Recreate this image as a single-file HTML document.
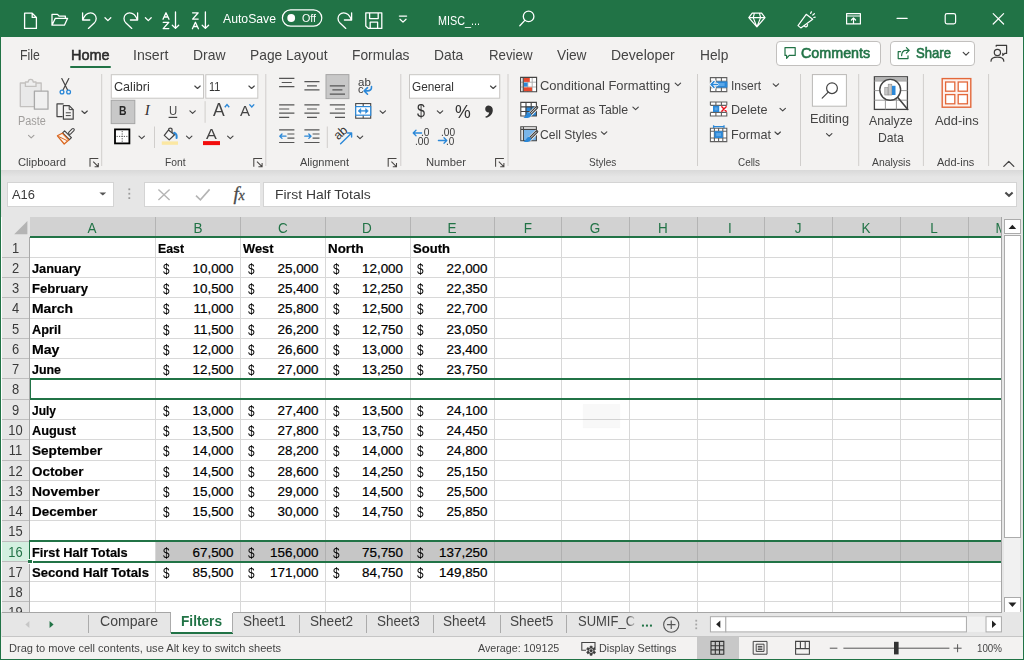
<!DOCTYPE html><html><head><meta charset="utf-8"><title>Excel</title><style>
*{box-sizing:border-box;margin:0;padding:0}
html,body{width:1024px;height:660px;overflow:hidden;background:#f3f2f1;font-family:"Liberation Sans",sans-serif;}
.abs{position:absolute}
.t{position:absolute;white-space:nowrap;line-height:1;color:#444}
#titlebar{position:absolute;left:0;top:0;width:1024px;height:37px;background:#217346}
#tabs{position:absolute;left:0;top:37px;width:1024px;height:35px;background:#f3f2f1}
#ribbon{position:absolute;left:0;top:72px;width:1024px;height:98px;background:#f3f2f1}
#fbar{position:absolute;left:0;top:170px;width:1024px;height:47px;background:#e6e6e6}
#grid{position:absolute;left:0;top:217px;width:1024px;height:395px;background:#fff;overflow:hidden}
#sheettabs{position:absolute;left:0;top:611.6px;width:1024px;height:25.4px;background:#e6e6e6}
#status{position:absolute;left:0;top:637px;width:1024px;height:23px;background:#f3f2f1}
.wb{position:absolute;background:#217346}
svg{position:absolute;overflow:visible}
.cell{position:absolute;white-space:nowrap;font-size:13.4px;line-height:20px;color:#000;height:20px;-webkit-text-stroke:0.2px #000}
.b{font-weight:bold;transform-origin:0 50%}
</style></head><body>
<div id="titlebar">
<svg style="left:0;top:0" width="1024" height="37" fill="none" stroke="#fff" stroke-width="1.3" stroke-linecap="round" stroke-linejoin="round">
<!-- new doc -->
<path d="M24.6 13.2 H32.2 L36.4 17.4 V28.4 H24.6 Z M32.2 13.2 V17.4 H36.4"/>
<!-- open folder -->
<path d="M52 25.2 V14.4 H57.5 L59.3 16.2 H65.4 V18.3 M52 25.2 L55.3 18.3 H67.6 L64.4 25.2 Z"/>
<!-- undo -->
<path d="M82.6 12.8 V20 H89.8 M82.8 19.8 C84.5 15.5 87.5 12.9 90.6 12.9 C94 12.9 96.2 15.6 96.2 18.6 C96.2 20.4 95.4 21.9 94.2 23.1 L88.4 28.4"/>
<path d="M105 17.8 L107.9 20.6 L110.8 17.8"/>
<!-- redo -->
<path d="M137.6 12.8 V20 H130.4 M137.4 19.8 C135.7 15.5 132.7 12.9 129.6 12.9 C126.2 12.9 124 15.6 124 18.6 C124 20.4 124.8 21.9 126 23.1 L131.8 28.4"/>
<path d="M145.4 17.8 L148.3 20.6 L151.2 17.8"/>
<!-- sort AZ -->
<path d="M175.5 11.9 V28.4 M172.3 25.2 L175.5 28.4 L178.7 25.2"/>
<path d="M163 19.2 L166 12.8 L169 19.2 M164.1 17 H167.9"/>
<path d="M163.2 22.3 H168.8 L163.2 28.6 H168.8"/>
<!-- sort ZA -->
<path d="M205.4 11.9 V28.4 M202.2 25.2 L205.4 28.4 L208.6 25.2"/>
<path d="M192.6 12.8 H198.2 L192.6 19.1 H198.2"/>
<path d="M192.4 28.7 L195.4 22.3 L198.4 28.7 M193.5 26.5 H197.3"/>
<!-- toggle -->
<rect x="282.4" y="9.8" width="39.4" height="16.4" rx="8.2" stroke-width="1.2"/>
<circle cx="291.2" cy="18" r="3.9" fill="#fff" stroke="none"/>
<!-- repeat -->
<path d="M351.6 12.8 V20 H344.4 M351.4 19.8 C349.7 15.5 346.7 12.9 343.6 12.9 C340.2 12.9 338 15.6 338 18.6 C338 20.4 338.8 21.9 340 23.1 L345.8 28.4"/>
<!-- save -->
<path d="M365.8 12.8 H381.8 V28.4 H368.2 L365.8 26 Z M369.6 12.8 V18.6 H378.2 V12.8 M370.2 28.4 V22.2 H377.6 V28.4"/>
<!-- customize -->
<path d="M399.4 16.1 H406.6 M400 19.2 L403 22.1 L406 19.2"/>
<!-- search -->
<circle cx="528.6" cy="16.4" r="5.3"/><path d="M524.8 20.4 L519.8 25.8"/>
<!-- diamond -->
<path d="M752.2 13.1 H761.6 L765 17.6 L756.9 26.9 L748.8 17.6 Z M748.8 17.6 H765 M754.4 13.1 L753.2 17.6 L756.9 26.9 L760.6 17.6 L759.4 13.1" stroke-width="1.2"/>
<!-- megaphone -->
<path d="M806.2 14.3 L812.7 19.3 L800.8 27.9 L798 25.6 Z M804.4 25.6 C804.8 27.4 807.4 27.4 807.6 24.6 M810.6 13.4 L811.4 11.9 M812.8 15 L814.4 13.7 M813.8 17.5 L815.2 17.1" stroke-width="1.2"/>
<!-- ribbon display -->
<path d="M846.6 13.7 H860.4 V23.9 H846.6 Z M846.6 16 H860.4 M853.5 23.9 V18.2 M851.4 20 L853.5 18 L855.6 20" stroke-width="1.2"/>
<!-- min / max / close -->
<path d="M897 18.3 H907.2" stroke-width="1.2"/>
<rect x="945.2" y="13.7" width="10.4" height="10.2" rx="1.8" stroke-width="1.2"/>
<path d="M993.2 13.6 L1003.6 24 M1003.6 13.6 L993.2 24" stroke-width="1.2"/>
</svg>
<div class="t" style="left:222.5px;top:12.1px;font-size:13px;color:#fff;transform-origin:0 0;transform:scaleX(0.940);">AutoSave</div>
<div class="t" style="left:302.3px;top:12.6px;font-size:11px;color:#fff;transform-origin:0 0;transform:scaleX(0.974);">Off</div>
<div class="t" style="left:437.8px;top:13.7px;font-size:13px;color:#fff;transform-origin:0 0;transform:scaleX(0.829);">MISC_...</div>
</div>
<div id="tabs">
<div class="t" style="left:19.5px;top:9.6px;font-size:15px;color:#444;transform-origin:0 0;transform:scaleX(0.819);">File</div>
<div class="t" style="left:70.8px;top:9.6px;font-size:15px;color:#2b2b2b;transform-origin:0 0;transform:scaleX(0.967);-webkit-text-stroke:0.55px #2b2b2b;">Home</div>
<div class="t" style="left:133.0px;top:9.6px;font-size:15px;color:#444;transform-origin:0 0;transform:scaleX(0.941);">Insert</div>
<div class="t" style="left:192.5px;top:9.6px;font-size:15px;color:#444;transform-origin:0 0;transform:scaleX(0.928);">Draw</div>
<div class="t" style="left:250.0px;top:9.6px;font-size:15px;color:#444;transform-origin:0 0;transform:scaleX(0.920);">Page Layout</div>
<div class="t" style="left:352.3px;top:9.6px;font-size:15px;color:#444;transform-origin:0 0;transform:scaleX(0.920);">Formulas</div>
<div class="t" style="left:434.3px;top:9.6px;font-size:15px;color:#444;transform-origin:0 0;transform:scaleX(0.922);">Data</div>
<div class="t" style="left:488.5px;top:9.6px;font-size:15px;color:#444;transform-origin:0 0;transform:scaleX(0.884);">Review</div>
<div class="t" style="left:557.0px;top:9.6px;font-size:15px;color:#444;transform-origin:0 0;transform:scaleX(0.915);">View</div>
<div class="t" style="left:611.3px;top:9.6px;font-size:15px;color:#444;transform-origin:0 0;transform:scaleX(0.932);">Developer</div>
<div class="t" style="left:700.0px;top:9.6px;font-size:15px;color:#444;transform-origin:0 0;transform:scaleX(0.917);">Help</div>
<div class="abs" style="left:70px;top:28.5px;width:41px;height:2.9px;background:#217346;border-radius:1px"></div>
<div class="abs" style="left:775.5px;top:3.6000000000000014px;width:105px;height:25px;background:#fff;border:1px solid #c2c0be;border-radius:4px"></div>
<div class="abs" style="left:889.5px;top:3.6000000000000014px;width:85.5px;height:25px;background:#fff;border:1px solid #c2c0be;border-radius:4px"></div>
<div class="t" style="left:801.3px;top:8.9px;font-size:14.5px;color:#217346;transform-origin:0 0;transform:scaleX(0.987);-webkit-text-stroke:0.6px #217346;">Comments</div>
<div class="t" style="left:915.5px;top:8.9px;font-size:14.5px;color:#217346;transform-origin:0 0;transform:scaleX(0.905);-webkit-text-stroke:0.6px #217346;">Share</div>
<svg style="left:0;top:0" width="1024" height="35" fill="none" stroke="#217346" stroke-width="1.2" stroke-linecap="round" stroke-linejoin="round">
<path d="M785 10.600000000000001 H795.2 V18.4 H789.2 L786.6 21.4 V18.4 H785 Z"/>
<path d="M900.6 14.600000000000001 H898.2 V21.6 H908 V18.799999999999997 M901.6 18.6 C901.8 15.200000000000003 903.6 13.399999999999999 906 13.399999999999999 H908.8 M906.4 10.600000000000001 L909.2 13.399999999999999 L906.4 16.200000000000003"/>
<path d="M963.2 15.399999999999999 L966 18.200000000000003 L968.8 15.399999999999999" stroke="#444"/>
<g stroke="#3b3a39" stroke-width="1.2">
<circle cx="997.4" cy="15.399999999999999" r="3.1"/>
<path d="M991 24.200000000000003 C991 18.799999999999997 1003.8 18.799999999999997 1003.8 24.200000000000003"/>
<path d="M996.2 9.200000000000003 V8.399999999999999 H1006.6 V16.4 H1004.8 L1002.8 18.4 V16.4"/>
</g>
</svg>
</div>
<div id="ribbon">
<svg style="left:0;top:0" width="1024" height="98" viewBox="0 72 1024 98"><path d="M101.7 74 V166" stroke="#d0cecc" stroke-width="1"/><path d="M265.8 74 V166" stroke="#d0cecc" stroke-width="1"/><path d="M400.8 74 V166" stroke="#d0cecc" stroke-width="1"/><path d="M508 74 V166" stroke="#d0cecc" stroke-width="1"/><path d="M697.5 74 V166" stroke="#d0cecc" stroke-width="1"/><path d="M800.5 74 V166" stroke="#d0cecc" stroke-width="1"/><path d="M858.7 74 V166" stroke="#d0cecc" stroke-width="1"/><path d="M923.4 74 V166" stroke="#d0cecc" stroke-width="1"/><path d="M988.6 74 V166" stroke="#d0cecc" stroke-width="1"/><g fill="none" stroke="#c3c1bf" stroke-width="1.3" stroke-linejoin="round"><path d="M20.3 83 H41.2 V106.6 H20.3 Z" fill="#e9e9e9"/><path d="M25.4 86.4 V82 H28.2 C28.2 78.4 33.2 78.4 33.2 82 H36 V86.4 Z" fill="#eeeeee"/><rect x="34.4" y="91.2" width="13.6" height="18" fill="#f0f0f0" stroke="#a9a9a9"/></g><path d="M28.5 135.4 L31.2 137.9 L33.9 135.4" stroke="#a19f9d" stroke-width="1.15" fill="none" stroke-linecap="round" stroke-linejoin="round"/><g fill="none" stroke-linecap="round"><path d="M61.8 78.6 L67.6 90 M68.8 78.6 L63 90" stroke="#444" stroke-width="1.2"/><circle cx="62" cy="92" r="1.9" stroke="#2b88d8" stroke-width="1.3"/><circle cx="68.6" cy="92" r="1.9" stroke="#2b88d8" stroke-width="1.3"/></g><g fill="none" stroke="#444" stroke-width="1.2" stroke-linejoin="round"><path d="M62.6 116.6 H57 V103.8 H63.6"/><path d="M63.4 105.6 H69.2 L73.2 109.6 V119.2 H63.4 Z" fill="#f3f2f1"/><path d="M69.2 105.6 V109.6 H73.2 M65.8 112.8 H70.8 M65.8 115.6 H70.8" stroke-width="1"/></g><path d="M81.9 111.0 L84.6 113.5 L87.3 111.0" stroke="#444" stroke-width="1.15" fill="none" stroke-linecap="round" stroke-linejoin="round"/><g fill="none" stroke-linejoin="round" stroke-linecap="round"><path d="M69.8 133 L73 129.8" stroke="#444" stroke-width="3.6"/><path d="M69.8 133 L73 129.8" stroke="#f3f2f1" stroke-width="1.5"/><path d="M64.6 130.8 L71.4 137.6 L69.4 139.6 L62.6 132.8 Z" stroke="#444" stroke-width="1.2" fill="#f3f2f1"/><path d="M62.2 133.2 L57.4 135.8 L64.2 144 L68.8 140 Z" stroke="#d9661f" stroke-width="1.2" fill="#fdf3ea"/><path d="M58.8 136.6 L66.6 140.4" stroke="#d9661f" stroke-width="1"/></g><path d="M90 166.70000000000002 V158.4 H98.3 M93.2 161.6 L98.2 166.6 M94.6 166.70000000000002 H98.3 V163.0" stroke="#484644" stroke-width="1.05" fill="none"/><rect x="111.3" y="74.7" width="92.2" height="23.5" fill="#fff" stroke="#c8c6c4" stroke-width="1"/><rect x="205.8" y="74.7" width="52" height="23.5" fill="#fff" stroke="#c8c6c4" stroke-width="1"/><path d="M194.8 86.0 L197.5 88.5 L200.2 86.0" stroke="#444" stroke-width="1.15" fill="none" stroke-linecap="round" stroke-linejoin="round"/><path d="M248.9 86.0 L251.6 88.5 L254.3 86.0" stroke="#444" stroke-width="1.15" fill="none" stroke-linecap="round" stroke-linejoin="round"/><rect x="111.2" y="100.3" width="23.6" height="23.3" fill="#c8c8c8" stroke="#a6a6a6" stroke-width="1"/><path d="M168.6 117.4 H177.2" stroke="#444" stroke-width="1.2"/><path d="M189.9 110.9 L192.6 113.4 L195.3 110.9" stroke="#444" stroke-width="1.15" fill="none" stroke-linecap="round" stroke-linejoin="round"/><path d="M205.1 101.2 V122.8" stroke="#d0cecc" stroke-width="1"/><path d="M224.8 107.2 L227 104.6 L229.2 107.2" stroke="#2b88d8" stroke-width="1.4" fill="none"/><path d="M249.4 104.4 L251.8 107 L254.2 104.4" stroke="#2b88d8" stroke-width="1.4" fill="none"/><rect x="115" y="129.4" width="14.4" height="14" fill="#fff" stroke="#000" stroke-width="1.8"/><path d="M122.2 131 V142 M116.6 136.4 H128" stroke="#555" stroke-width="1" stroke-dasharray="1.2 1.2"/><path d="M139.0 136.1 L141.7 138.6 L144.4 136.1" stroke="#444" stroke-width="1.15" fill="none" stroke-linecap="round" stroke-linejoin="round"/><path d="M154.5 126.5 V148" stroke="#d0cecc" stroke-width="1"/><g fill="none" stroke="#444" stroke-width="1.25" stroke-linejoin="round" stroke-linecap="round"><path d="M168.4 130.1 L164.3 135.4 L169.2 139.9 L174.5 134.7 Z" fill="#f6f6f6"/><path d="M168.7 130.4 V129 C168.7 127.8 172 127.8 172 129 V132.6"/></g><path d="M174.2 132.7 C176.2 133.4 176.9 135.6 176.6 138" stroke="#2b88d8" stroke-width="2" fill="none" stroke-linecap="round"/><rect x="161.8" y="141.4" width="16.2" height="3.4" fill="#fbe7a2"/><path d="M186.5 136.1 L189.2 138.6 L191.9 136.1" stroke="#444" stroke-width="1.15" fill="none" stroke-linecap="round" stroke-linejoin="round"/><rect x="203" y="141.1" width="17" height="4" fill="#f20d0d"/><path d="M227.6 136.1 L230.3 138.6 L233.0 136.1" stroke="#444" stroke-width="1.15" fill="none" stroke-linecap="round" stroke-linejoin="round"/><path d="M253.8 166.70000000000002 V158.4 H262.1 M257.0 161.6 L262.0 166.6 M258.40000000000003 166.70000000000002 H262.1 V163.0" stroke="#484644" stroke-width="1.05" fill="none"/></svg>
<div class="t" style="left:17.5px;top:42.5px;font-size:12px;color:#a19f9d;transform-origin:0 0;transform:scaleX(0.906);">Paste</div>
<div class="t" style="left:18.3px;top:85.2px;font-size:11.5px;color:#444;transform-origin:0 0;transform:scaleX(0.975);">Clipboard</div>
<div class="t" style="left:113.6px;top:8.1px;font-size:13px;color:#333;transform-origin:0 0;transform:scaleX(0.969);">Calibri</div>
<div class="t" style="left:208.8px;top:8.1px;font-size:13px;color:#333;transform-origin:0 0;transform:scaleX(0.830);">11</div>
<div class="t" style="left:119.1px;top:31.9px;font-size:13.5px;font-weight:bold;color:#262626;transform-origin:0 0;transform:scaleX(0.769);">B</div>
<div class="t" style="left:144.8px;top:31.200000000000003px;font-size:15px;font-family:'Liberation Serif',serif;font-style:italic;color:#333">I</div>
<div class="t" style="left:168.8px;top:31.8px;font-size:13.5px;color:#444;transform-origin:0 0;transform:scaleX(0.841);">U</div>
<div class="t" style="left:213.3px;top:28.8px;font-size:18.5px;color:#444;transform-origin:0 0;transform:scaleX(0.948);">A</div>
<div class="t" style="left:240.2px;top:32.2px;font-size:14.5px;color:#444;transform-origin:0 0;transform:scaleX(1.034);">A</div>
<div class="t" style="left:206.2px;top:55.1px;font-size:14.5px;color:#444;transform-origin:0 0;transform:scaleX(1.117);">A</div>
<div class="t" style="left:165.3px;top:85.2px;font-size:11.5px;color:#444;transform-origin:0 0;transform:scaleX(0.895);">Font</div>
<svg style="left:0;top:0" width="1024" height="98" viewBox="0 72 1024 98"><rect x="326" y="74.6" width="22.9" height="24" fill="#c8c8c8" stroke="#a6a6a6" stroke-width="1"/><path d="M279.1 78.4 H294.4 M281.7 82.5 H291.8 M279.1 86.6 H294.4" stroke="#555" stroke-width="1.2" fill="none"/><path d="M304.4 81.6 H319.5 M307.0 85.8 H316.9 M304.4 89.9 H319.5" stroke="#555" stroke-width="1.2" fill="none"/><path d="M329.8 85.8 H345.0 M332.4 89.9 H342.4 M329.8 94.1 H345.0" stroke="#555" stroke-width="1.2" fill="none"/><path d="M279.1 104.9 H294.4 M279.1 109 H289.2 M279.1 113.2 H294.4 M279.1 117.3 H289.2" stroke="#555" stroke-width="1.2" fill="none"/><path d="M304.4 104.9 H319.5 M307.0 109 H316.9 M304.4 113.2 H319.5 M307.0 117.3 H316.9" stroke="#555" stroke-width="1.2" fill="none"/><path d="M329.8 104.9 H345.0 M335.0 109 H345.0 M329.8 113.2 H345.0 M335.0 117.3 H345.0" stroke="#555" stroke-width="1.2" fill="none"/><path d="M371.5 86.6 C371.8 89.6 370 90.9 367.4 90.9 H364.8 M367.5 87.6 L364.2 90.9 L367.5 94.2" stroke="#2b88d8" stroke-width="1.6" fill="none" stroke-linecap="round" stroke-linejoin="round"/><g fill="none" stroke="#444" stroke-width="1.1"><rect x="355.7" y="103.6" width="15" height="14.6" fill="#fff"/><path d="M363.2 103.6 V106.6 M363.2 115.2 V118.2"/></g><rect x="355.7" y="106.6" width="15" height="8.6" fill="#fdfeff" stroke="#2b88d8" stroke-width="1.2"/><path d="M360 110.9 H366.4" stroke="#2b88d8" stroke-width="1.3" fill="none"/><path d="M358 110.9 L360.8 108.4 V113.4 Z M368.4 110.9 L365.6 108.4 V113.4 Z" fill="#2b88d8" stroke="#2b88d8" stroke-width="0.5" stroke-linejoin="round"/><path d="M380.1 110.9 L382.8 113.4 L385.5 110.9" stroke="#444" stroke-width="1.15" fill="none" stroke-linecap="round" stroke-linejoin="round"/><path d="M279.1 129.9 H294.4 M287.4 134 H294.4 M287.4 138.2 H294.4 M279.1 142.5 H294.4" stroke="#555" stroke-width="1.2"/><path d="M279.8 136.2 H286 M282 134 L279.8 136.2 L282 138.4" stroke="#2b88d8" stroke-width="1.3" fill="none" stroke-linecap="round" stroke-linejoin="round"/><path d="M304.4 129.9 H319.5 M312.6 134 H319.5 M312.6 138.2 H319.5 M304.4 142.5 H319.5" stroke="#555" stroke-width="1.2"/><path d="M304.8 136.2 H311 M308.8 134 L311 136.2 L308.8 138.4" stroke="#2b88d8" stroke-width="1.3" fill="none" stroke-linecap="round" stroke-linejoin="round"/><path d="M327.3 126.5 V148" stroke="#d0cecc" stroke-width="1"/><path d="M340.6 143.8 L351.4 133.2 M347.6 133 H351.6 V137" stroke="#2b88d8" stroke-width="1.4" fill="none" stroke-linecap="round" stroke-linejoin="round"/><path d="M357.3 136.1 L360.0 138.6 L362.7 136.1" stroke="#444" stroke-width="1.15" fill="none" stroke-linecap="round" stroke-linejoin="round"/><path d="M388.2 166.70000000000002 V158.4 H396.5 M391.4 161.6 L396.4 166.6 M392.8 166.70000000000002 H396.5 V163.0" stroke="#484644" stroke-width="1.05" fill="none"/><rect x="409.5" y="74.7" width="90.2" height="23.5" fill="#fff" stroke="#c8c6c4" stroke-width="1"/><path d="M490.5 86.0 L493.2 88.5 L495.9 86.0" stroke="#444" stroke-width="1.15" fill="none" stroke-linecap="round" stroke-linejoin="round"/><path d="M437.3 110.9 L440.0 113.4 L442.7 110.9" stroke="#444" stroke-width="1.15" fill="none" stroke-linecap="round" stroke-linejoin="round"/><path d="M488.6 105.6 C491.4 105.6 492.8 107.8 492.8 110.2 C492.8 113.8 490.2 116.8 485.8 117.8 L485.4 116.6 C487.6 115.8 489 114.2 489.2 112.4 C487 112.6 485.2 111.2 485.2 109 C485.2 107 486.6 105.6 488.6 105.6 Z" fill="#333"/><path d="M413.2 133 H421.6 M416 130.2 L413.2 133 L416 135.8" stroke="#2b88d8" stroke-width="1.3" fill="none" stroke-linecap="round" stroke-linejoin="round"/><path d="M438.4 140.5 H446.8 M444 137.7 L446.8 140.5 L444 143.3" stroke="#2b88d8" stroke-width="1.3" fill="none" stroke-linecap="round" stroke-linejoin="round"/><path d="M495.6 166.70000000000002 V158.4 H503.90000000000003 M498.8 161.6 L503.8 166.6 M500.20000000000005 166.70000000000002 H503.90000000000003 V163.0" stroke="#484644" stroke-width="1.05" fill="none"/><rect x="520.6" y="77.4" width="16" height="14.4" fill="#fff"/><path d="M520.6 82.2 H536.6 M520.6 87 H536.6 M527.8 77.4 V91.8 M532.2 77.4 V91.8" stroke="#a8a8a8" stroke-width="0.9" fill="none"/><rect x="523.4" y="77.9" width="6.4" height="4" fill="#e8492e"/><rect x="523.4" y="82.7" width="4.2" height="3.9" fill="#2b88d8"/><rect x="523.4" y="87.4" width="8.6" height="4" fill="#e8492e"/><path d="M520.6 77.4 H536.6 V91.8 H520.6 Z M523.2 77.4 V91.8" stroke="#444" stroke-width="1.1" fill="none"/><rect x="520.8" y="102.4" width="15.6" height="13.6" fill="#fff"/><rect x="525.6" y="106.4" width="10.8" height="9.6" fill="#2b88d8"/><path d="M520.8 102.4 H536.4 V116.0 H520.8 Z M526.0 102.4 V116.0 M531.2 102.4 V116.0 M520.8 106.9 H536.4 M520.8 111.5 H536.4" stroke="#444" stroke-width="1.1" fill="none"/><path d="M537.4 107.0 L529 115.4" stroke="#fff" stroke-width="4.4"/><path d="M536.8 107.4 L530 114.2" stroke="#444" stroke-width="3" stroke-linecap="round"/><path d="M536.6 107.6 L530.6 113.6" stroke="#e0e0e0" stroke-width="1"/><path d="M529.4 112.6 C526.4 112.6 526.6 116.0 523.4 117.4 C527.6 118.8 531.6 117.2 531.4 114.4 Z" fill="#2b88d8"/><rect x="520.8" y="126.8" width="15.6" height="14" fill="#fff"/><rect x="523.4" y="129.4" width="13" height="11.4" fill="#7ab6ea"/><path d="M520.8 126.8 H536.4 V140.8 H520.8 Z M523.4 126.8 V140.8 M520.8 129.4 H536.4" stroke="#444" stroke-width="1.1" fill="none"/><path d="M537.4 131.2 L529 139.6" stroke="#fff" stroke-width="4.4"/><path d="M536.8 131.6 L530 138.4" stroke="#444" stroke-width="3" stroke-linecap="round"/><path d="M536.6 131.8 L530.6 137.8" stroke="#e0e0e0" stroke-width="1"/><path d="M529.4 136.8 C526.4 136.8 526.6 140.2 523.4 141.6 C527.6 143.0 531.6 141.4 531.4 138.6 Z" fill="#2b88d8"/><path d="M675.2 83.1 L677.9 85.6 L680.6 83.1" stroke="#444" stroke-width="1.15" fill="none" stroke-linecap="round" stroke-linejoin="round"/><path d="M632.9 107.2 L635.6 109.7 L638.3 107.2" stroke="#444" stroke-width="1.15" fill="none" stroke-linecap="round" stroke-linejoin="round"/><path d="M601.4 131.8 L604.1 134.3 L606.8 131.8" stroke="#444" stroke-width="1.15" fill="none" stroke-linecap="round" stroke-linejoin="round"/><rect x="710.4" y="77.6" width="16.4" height="14" fill="#fff"/><path d="M710.4 77.6 H726.8 V91.6 H710.4 Z M710.4 81.2 H726.8 M710.4 87.8 H726.8 M715.9 77.6 V91.6 M721.4 77.6 V91.6" stroke="#606060" stroke-width="1.1" fill="none"/><rect x="716.4" y="81.4" width="11" height="6.2" fill="#2b88d8"/><rect x="719" y="83" width="5.6" height="3" fill="#5aa7e8"/><path d="M711.2 84.5 H717 M714.2 81.3 L711 84.5 L714.2 87.7" stroke="#fff" stroke-width="3.4" fill="none" stroke-linecap="round" stroke-linejoin="round"/><path d="M711.2 84.5 H717.4 M714 81.6 L711 84.5 L714 87.4" stroke="#2b88d8" stroke-width="1.5" fill="none" stroke-linecap="round" stroke-linejoin="round"/><rect x="710.4" y="102" width="16.4" height="14" fill="#fff"/><path d="M710.4 105.2 V102 H726.8 V105.2 M710.4 105.4 H726.8 M710.4 112.4 H726.8 M710.4 112.4 V116 H726.8 V112.4 M715.9 102 V105.4 M721.4 102 V105.4 M715.9 112.4 V116 M721.4 112.4 V116" stroke="#606060" stroke-width="1.1" fill="none"/><rect x="713" y="105.8" width="6.2" height="6.2" fill="#2b88d8"/><rect x="714.6" y="107.4" width="3" height="3" fill="#5aa7e8"/><path d="M721.8 106.7 L726.2 111.3 M726.2 106.7 L721.8 111.3" stroke="#e8111c" stroke-width="1.4" stroke-linecap="round"/><rect x="710.4" y="128.2" width="16.4" height="13.4" fill="#fff"/><path d="M710.4 128.2 H726.8 V141.6 H710.4 Z M710.4 131.2 H726.8 M710.4 138 H726.8 M714.4 128.2 V141.6 M722.8 128.2 V141.6 M718.6 128.2 V131.2 M718.6 138 V141.6" stroke="#606060" stroke-width="1.1" fill="none"/><rect x="714.4" y="131.2" width="8.4" height="6.8" fill="#2b88d8"/><rect x="716.2" y="133" width="4.8" height="3.2" fill="#5aa7e8"/><path d="M713.6 126.6 H724 M713.6 125.2 V128 M724 125.2 V128" stroke="#2b88d8" stroke-width="1.3" fill="none"/><path d="M773.2 83.8 L775.9 86.3 L778.6 83.8" stroke="#444" stroke-width="1.15" fill="none" stroke-linecap="round" stroke-linejoin="round"/><path d="M780.0 108.4 L782.7 110.9 L785.4 108.4" stroke="#444" stroke-width="1.15" fill="none" stroke-linecap="round" stroke-linejoin="round"/><path d="M775.0 132.0 L777.7 134.5 L780.4 132.0" stroke="#444" stroke-width="1.15" fill="none" stroke-linecap="round" stroke-linejoin="round"/><rect x="812.4" y="74.6" width="34" height="31.6" fill="#fff" stroke="#bab8b6" stroke-width="1"/><circle cx="832" cy="88.2" r="5.4" fill="none" stroke="#444" stroke-width="1.2"/><path d="M828.2 92.2 L822.2 98.2" stroke="#444" stroke-width="1.2" stroke-linecap="round"/><path d="M826.5 133.6 L829.2 136.1 L831.9 133.6" stroke="#444" stroke-width="1.15" fill="none" stroke-linecap="round" stroke-linejoin="round"/><rect x="874.4" y="76.8" width="33" height="32.6" fill="#fff" stroke="#444" stroke-width="1.3"/><rect x="875" y="77.4" width="31.8" height="3.4" fill="#b5b5b5"/><path d="M874.4 81 H907.4 M874.4 90.6 H907.4 M874.4 100.2 H907.4 M885.4 81 V109.4 M896.4 81 V109.4" stroke="#9a9a9a" stroke-width="1" fill="none"/><circle cx="890.2" cy="89.8" r="10.4" fill="#fff" stroke="#444" stroke-width="1.4"/><rect x="884.8" y="87.6" width="3.3" height="7.4" fill="#c8c8c8" stroke="#8a8a8a" stroke-width="0.6"/><rect x="888.2" y="84.2" width="3.6" height="10.8" fill="#c8c8c8" stroke="#8a8a8a" stroke-width="0.6"/><rect x="892" y="85.8" width="3.5" height="9.2" fill="#2b88d8"/><path d="M897.8 97.6 L907.8 109.4" stroke="#444" stroke-width="1.6" stroke-linecap="round"/><rect x="942.2" y="78.6" width="28.6" height="28.6" fill="#fdf1ec" stroke="#e3683a" stroke-width="1.4"/><rect x="945.6" y="82" width="9.2" height="9.2" fill="#fff" stroke="#e3683a" stroke-width="1.3"/><rect x="958.2" y="82" width="9.2" height="9.2" fill="#fff" stroke="#e3683a" stroke-width="1.3"/><rect x="945.6" y="94.6" width="9.2" height="9.2" fill="#fff" stroke="#e3683a" stroke-width="1.3"/><rect x="958.2" y="94.6" width="9.2" height="9.2" fill="#fff" stroke="#e3683a" stroke-width="1.3"/><path d="M1003.8 166.4 L1008.8 161.4 L1013.8 166.4" stroke="#444" stroke-width="1.3" fill="none" stroke-linecap="round" stroke-linejoin="round"/></svg>
<div class="t" style="left:357.6px;top:4.5px;font-size:10.5px;color:#3a3a3a;transform-origin:0 0;transform:scaleX(1.096);">ab</div>
<div class="t" style="left:357.6px;top:11.9px;font-size:11.5px;color:#3a3a3a;transform-origin:0 0;transform:scaleX(0.974);">c</div>
<div class="t" style="left:333.6px;top:55.2px;font-size:12.5px;color:#333;transform:rotate(-43deg);transform-origin:50% 50%;letter-spacing:-0.3px">ab</div>
<div class="t" style="left:300.4px;top:85.2px;font-size:11.5px;color:#444;transform-origin:0 0;transform:scaleX(0.958);">Alignment</div>
<div class="t" style="left:412.1px;top:8.1px;font-size:13px;color:#333;transform-origin:0 0;transform:scaleX(0.906);">General</div>
<div class="t" style="left:416.8px;top:29.3px;font-size:19px;color:#333;transform-origin:0 0;transform:scaleX(0.757);">$</div>
<div class="t" style="left:454.8px;top:30.2px;font-size:19px;color:#333;transform-origin:0 0;transform:scaleX(0.935);">%</div>
<div class="t" style="left:421.0px;top:54.9px;font-size:10.5px;color:#3a3a3a;transform-origin:0 0;transform:scaleX(0.982);">.0</div>
<div class="t" style="left:415.4px;top:63.8px;font-size:10.5px;color:#3a3a3a;transform-origin:0 0;transform:scaleX(0.973);">.00</div>
<div class="t" style="left:440.5px;top:54.9px;font-size:10.5px;color:#3a3a3a;transform-origin:0 0;transform:scaleX(0.966);">.00</div>
<div class="t" style="left:446.3px;top:63.8px;font-size:10.5px;color:#3a3a3a;transform-origin:0 0;transform:scaleX(0.948);">.0</div>
<div class="t" style="left:425.7px;top:85.2px;font-size:11.5px;color:#444;transform-origin:0 0;transform:scaleX(0.976);">Number</div>
<div class="t" style="left:539.9px;top:6.6px;font-size:13px;color:#444;transform-origin:0 0;transform:scaleX(0.996);">Conditional Formatting</div>
<div class="t" style="left:539.9px;top:31.1px;font-size:13px;color:#444;transform-origin:0 0;transform:scaleX(0.949);">Format as Table</div>
<div class="t" style="left:539.9px;top:55.6px;font-size:13px;color:#444;transform-origin:0 0;transform:scaleX(0.931);">Cell Styles</div>
<div class="t" style="left:588.8px;top:85.2px;font-size:11.5px;color:#444;transform-origin:0 0;transform:scaleX(0.872);">Styles</div>
<div class="t" style="left:730.7px;top:6.6px;font-size:13px;color:#444;transform-origin:0 0;transform:scaleX(0.929);">Insert</div>
<div class="t" style="left:730.7px;top:31.1px;font-size:13px;color:#444;transform-origin:0 0;transform:scaleX(0.971);">Delete</div>
<div class="t" style="left:730.7px;top:55.5px;font-size:13px;color:#444;transform-origin:0 0;transform:scaleX(0.969);">Format</div>
<div class="t" style="left:737.8px;top:85.2px;font-size:11.5px;color:#444;transform-origin:0 0;transform:scaleX(0.861);">Cells</div>
<div class="t" style="left:809.6px;top:40.1px;font-size:13.5px;color:#444;transform-origin:0 0;transform:scaleX(0.945);">Editing</div>
<div class="t" style="left:869.3px;top:41.9px;font-size:13px;color:#444;transform-origin:0 0;transform:scaleX(0.945);">Analyze</div>
<div class="t" style="left:878.4px;top:58.5px;font-size:13px;color:#444;transform-origin:0 0;transform:scaleX(0.940);">Data</div>
<div class="t" style="left:871.9px;top:85.2px;font-size:11.5px;color:#444;transform-origin:0 0;transform:scaleX(0.901);">Analysis</div>
<div class="t" style="left:934.6px;top:41.9px;font-size:13px;color:#444;transform-origin:0 0;transform:scaleX(0.991);">Add-ins</div>
<div class="t" style="left:937.1px;top:85.2px;font-size:11.5px;color:#444;transform-origin:0 0;transform:scaleX(0.957);">Add-ins</div>
</div>
<div id="fbar">
<div class="abs" style="left:0;top:0;width:1024px;height:7px;background:linear-gradient(#d9d9d9,#e6e6e6)"></div>
<div class="abs" style="left:6.5px;top:12.199999999999989px;width:107px;height:24.6px;background:#fff;border:1px solid #d4d4d4"></div>
<div class="abs" style="left:144.4px;top:12.199999999999989px;width:116px;height:24.6px;background:#fff;border:1px solid #d4d4d4;border-right:none"></div>
<div class="abs" style="left:263.2px;top:12.199999999999989px;width:754px;height:24.6px;background:#fff;border:1px solid #d4d4d4"></div>
<div class="t" style="left:12.4px;top:18.3px;font-size:13.4px;color:#3a3a3a;transform-origin:0 0;transform:scaleX(0.965);">A16</div>
<div class="t" style="left:275.2px;top:18.3px;font-size:13.4px;color:#3a3a3a;transform-origin:0 0;transform:scaleX(1.040);">First Half Totals</div>
<svg style="left:0;top:0" width="1024" height="47" viewBox="0 170 1024 47">
<path d="M99.4 192.4 H106.2 L102.8 195.6 Z" fill="#555"/>
<g fill="#9a9a9a"><rect x="128.4" y="188.4" width="1.8" height="1.8"/><rect x="128.4" y="192.8" width="1.8" height="1.8"/><rect x="128.4" y="197.2" width="1.8" height="1.8"/></g>
<path d="M158.4 189.4 L169.6 200 M169.6 189.4 L158.4 200" stroke="#b4b4b4" stroke-width="1.4" fill="none"/>
<path d="M196 195.6 L200.4 199.8 L209.6 189.4" stroke="#b4b4b4" stroke-width="1.6" fill="none"/>
<path d="M1005.4 192.4 L1009 195.8 L1012.6 192.4" stroke="#4a4a4a" stroke-width="2" fill="none"/>
</svg>
<div class="t" style="left:233.6px;top:13.599999999999994px;font-size:19px;font-family:'Liberation Serif',serif;font-style:italic;color:#4a4a4a;letter-spacing:-0.3px;-webkit-text-stroke:0.3px #4a4a4a">f<span style="font-size:14px">x</span></div>
</div>
<div id="grid">
<div class="abs" style="left:2px;top:0;width:999px;height:19.5px;background:#e6e6e6"></div>
<div class="abs" style="left:30px;top:0;width:971px;height:19px;background:#d2d2d2"></div>
<svg style="left:2px;top:0" width="28" height="20"><path d="M25.4 4 V17.2 H12.2 Z" fill="#b4b4b4"/></svg>
<div class="t" style="left:72.2px;width:40px;text-align:center;top:2.5px;font-size:15px;color:#217346;transform:scaleX(0.9)">A</div>
<div class="t" style="left:177.5px;width:40px;text-align:center;top:2.5px;font-size:15px;color:#217346;transform:scaleX(0.9)">B</div>
<div class="abs" style="left:155.0px;top:0;width:1px;height:19px;background:#b4b4b4"></div>
<div class="t" style="left:262.5px;width:40px;text-align:center;top:2.5px;font-size:15px;color:#217346;transform:scaleX(0.9)">C</div>
<div class="abs" style="left:240.0px;top:0;width:1px;height:19px;background:#b4b4b4"></div>
<div class="t" style="left:347.2px;width:40px;text-align:center;top:2.5px;font-size:15px;color:#217346;transform:scaleX(0.9)">D</div>
<div class="abs" style="left:325.0px;top:0;width:1px;height:19px;background:#b4b4b4"></div>
<div class="t" style="left:431.8px;width:40px;text-align:center;top:2.5px;font-size:15px;color:#217346;transform:scaleX(0.9)">E</div>
<div class="abs" style="left:409.5px;top:0;width:1px;height:19px;background:#b4b4b4"></div>
<div class="t" style="left:507.5px;width:40px;text-align:center;top:2.5px;font-size:15px;color:#217346;transform:scaleX(0.9)">F</div>
<div class="abs" style="left:494.0px;top:0;width:1px;height:19px;background:#b4b4b4"></div>
<div class="t" style="left:574.9px;width:40px;text-align:center;top:2.5px;font-size:15px;color:#217346;transform:scaleX(0.9)">G</div>
<div class="abs" style="left:561.0px;top:0;width:1px;height:19px;background:#b4b4b4"></div>
<div class="t" style="left:642.6px;width:40px;text-align:center;top:2.5px;font-size:15px;color:#217346;transform:scaleX(0.9)">H</div>
<div class="abs" style="left:628.8px;top:0;width:1px;height:19px;background:#b4b4b4"></div>
<div class="t" style="left:710.4px;width:40px;text-align:center;top:2.5px;font-size:15px;color:#217346;transform:scaleX(0.9)">I</div>
<div class="abs" style="left:696.5px;top:0;width:1px;height:19px;background:#b4b4b4"></div>
<div class="t" style="left:778.1px;width:40px;text-align:center;top:2.5px;font-size:15px;color:#217346;transform:scaleX(0.9)">J</div>
<div class="abs" style="left:764.3px;top:0;width:1px;height:19px;background:#b4b4b4"></div>
<div class="t" style="left:845.9px;width:40px;text-align:center;top:2.5px;font-size:15px;color:#217346;transform:scaleX(0.9)">K</div>
<div class="abs" style="left:832.0px;top:0;width:1px;height:19px;background:#b4b4b4"></div>
<div class="t" style="left:913.6px;width:40px;text-align:center;top:2.5px;font-size:15px;color:#217346;transform:scaleX(0.9)">L</div>
<div class="abs" style="left:899.8px;top:0;width:1px;height:19px;background:#b4b4b4"></div>
<div class="t" style="left:981.4px;width:40px;text-align:center;top:2.5px;font-size:15px;color:#217346;transform:scaleX(0.9)">M</div>
<div class="abs" style="left:967.5px;top:0;width:1px;height:19px;background:#b4b4b4"></div>
<div class="abs" style="left:2px;top:19.5px;width:27.5px;height:380px;background:#e6e6e6"></div>
<div class="abs" style="left:155.0px;top:20px;width:1px;height:380px;background:#d8d8d8"></div>
<div class="abs" style="left:240.0px;top:20px;width:1px;height:380px;background:#d8d8d8"></div>
<div class="abs" style="left:325.0px;top:20px;width:1px;height:380px;background:#d8d8d8"></div>
<div class="abs" style="left:409.5px;top:20px;width:1px;height:380px;background:#d8d8d8"></div>
<div class="abs" style="left:494.0px;top:20px;width:1px;height:380px;background:#d8d8d8"></div>
<div class="abs" style="left:561.0px;top:20px;width:1px;height:380px;background:#d8d8d8"></div>
<div class="abs" style="left:628.8px;top:20px;width:1px;height:380px;background:#d8d8d8"></div>
<div class="abs" style="left:696.5px;top:20px;width:1px;height:380px;background:#d8d8d8"></div>
<div class="abs" style="left:764.3px;top:20px;width:1px;height:380px;background:#d8d8d8"></div>
<div class="abs" style="left:832.0px;top:20px;width:1px;height:380px;background:#d8d8d8"></div>
<div class="abs" style="left:899.8px;top:20px;width:1px;height:380px;background:#d8d8d8"></div>
<div class="abs" style="left:967.5px;top:20px;width:1px;height:380px;background:#d8d8d8"></div>
<div class="abs" style="left:30px;top:39.8px;width:971px;height:1px;background:#d8d8d8"></div>
<div class="abs" style="left:2px;top:39.8px;width:27.5px;height:1px;background:#bdbdbd"></div>
<div class="t" style="left:1.8px;width:27px;text-align:center;top:22.5px;font-size:15px;color:#3a3a3a;transform:scaleX(0.86)">1</div>
<div class="abs" style="left:30px;top:60.0px;width:971px;height:1px;background:#d8d8d8"></div>
<div class="abs" style="left:2px;top:60.0px;width:27.5px;height:1px;background:#bdbdbd"></div>
<div class="t" style="left:1.8px;width:27px;text-align:center;top:42.8px;font-size:15px;color:#3a3a3a;transform:scaleX(0.86)">2</div>
<div class="abs" style="left:30px;top:80.3px;width:971px;height:1px;background:#d8d8d8"></div>
<div class="abs" style="left:2px;top:80.3px;width:27.5px;height:1px;background:#bdbdbd"></div>
<div class="t" style="left:1.8px;width:27px;text-align:center;top:63.0px;font-size:15px;color:#3a3a3a;transform:scaleX(0.86)">3</div>
<div class="abs" style="left:30px;top:100.6px;width:971px;height:1px;background:#d8d8d8"></div>
<div class="abs" style="left:2px;top:100.6px;width:27.5px;height:1px;background:#bdbdbd"></div>
<div class="t" style="left:1.8px;width:27px;text-align:center;top:83.3px;font-size:15px;color:#3a3a3a;transform:scaleX(0.86)">4</div>
<div class="abs" style="left:30px;top:120.9px;width:971px;height:1px;background:#d8d8d8"></div>
<div class="abs" style="left:2px;top:120.9px;width:27.5px;height:1px;background:#bdbdbd"></div>
<div class="t" style="left:1.8px;width:27px;text-align:center;top:103.6px;font-size:15px;color:#3a3a3a;transform:scaleX(0.86)">5</div>
<div class="abs" style="left:30px;top:141.1px;width:971px;height:1px;background:#d8d8d8"></div>
<div class="abs" style="left:2px;top:141.1px;width:27.5px;height:1px;background:#bdbdbd"></div>
<div class="t" style="left:1.8px;width:27px;text-align:center;top:123.9px;font-size:15px;color:#3a3a3a;transform:scaleX(0.86)">6</div>
<div class="abs" style="left:30px;top:161.4px;width:971px;height:1px;background:#d8d8d8"></div>
<div class="abs" style="left:2px;top:161.4px;width:27.5px;height:1px;background:#bdbdbd"></div>
<div class="t" style="left:1.8px;width:27px;text-align:center;top:144.1px;font-size:15px;color:#3a3a3a;transform:scaleX(0.86)">7</div>
<div class="abs" style="left:30px;top:181.7px;width:971px;height:1px;background:#d8d8d8"></div>
<div class="abs" style="left:2px;top:181.7px;width:27.5px;height:1px;background:#bdbdbd"></div>
<div class="t" style="left:1.8px;width:27px;text-align:center;top:164.4px;font-size:15px;color:#3a3a3a;transform:scaleX(0.86)">8</div>
<div class="abs" style="left:30px;top:201.9px;width:971px;height:1px;background:#d8d8d8"></div>
<div class="abs" style="left:2px;top:201.9px;width:27.5px;height:1px;background:#bdbdbd"></div>
<div class="t" style="left:1.8px;width:27px;text-align:center;top:184.7px;font-size:15px;color:#3a3a3a;transform:scaleX(0.86)">9</div>
<div class="abs" style="left:30px;top:222.2px;width:971px;height:1px;background:#d8d8d8"></div>
<div class="abs" style="left:2px;top:222.2px;width:27.5px;height:1px;background:#bdbdbd"></div>
<div class="t" style="left:1.8px;width:27px;text-align:center;top:204.9px;font-size:15px;color:#3a3a3a;transform:scaleX(0.86)">10</div>
<div class="abs" style="left:30px;top:242.5px;width:971px;height:1px;background:#d8d8d8"></div>
<div class="abs" style="left:2px;top:242.5px;width:27.5px;height:1px;background:#bdbdbd"></div>
<div class="t" style="left:1.8px;width:27px;text-align:center;top:225.2px;font-size:15px;color:#3a3a3a;transform:scaleX(0.86)">11</div>
<div class="abs" style="left:30px;top:262.7px;width:971px;height:1px;background:#d8d8d8"></div>
<div class="abs" style="left:2px;top:262.7px;width:27.5px;height:1px;background:#bdbdbd"></div>
<div class="t" style="left:1.8px;width:27px;text-align:center;top:245.5px;font-size:15px;color:#3a3a3a;transform:scaleX(0.86)">12</div>
<div class="abs" style="left:30px;top:283.0px;width:971px;height:1px;background:#d8d8d8"></div>
<div class="abs" style="left:2px;top:283.0px;width:27.5px;height:1px;background:#bdbdbd"></div>
<div class="t" style="left:1.8px;width:27px;text-align:center;top:265.7px;font-size:15px;color:#3a3a3a;transform:scaleX(0.86)">13</div>
<div class="abs" style="left:30px;top:303.3px;width:971px;height:1px;background:#d8d8d8"></div>
<div class="abs" style="left:2px;top:303.3px;width:27.5px;height:1px;background:#bdbdbd"></div>
<div class="t" style="left:1.8px;width:27px;text-align:center;top:286.0px;font-size:15px;color:#3a3a3a;transform:scaleX(0.86)">14</div>
<div class="abs" style="left:30px;top:323.5px;width:971px;height:1px;background:#d8d8d8"></div>
<div class="abs" style="left:2px;top:323.5px;width:27.5px;height:1px;background:#bdbdbd"></div>
<div class="t" style="left:1.8px;width:27px;text-align:center;top:306.3px;font-size:15px;color:#3a3a3a;transform:scaleX(0.86)">15</div>
<div class="abs" style="left:30px;top:343.8px;width:971px;height:1px;background:#d8d8d8"></div>
<div class="abs" style="left:2px;top:343.8px;width:27.5px;height:1px;background:#bdbdbd"></div>
<div class="abs" style="left:2px;top:324.5px;width:27px;height:19.5px;background:#d3f0e0"></div>
<div class="t" style="left:1.8px;width:27px;text-align:center;top:326.5px;font-size:15px;color:#217346;transform:scaleX(0.86)">16</div>
<div class="abs" style="left:30px;top:364.1px;width:971px;height:1px;background:#d8d8d8"></div>
<div class="abs" style="left:2px;top:364.1px;width:27.5px;height:1px;background:#bdbdbd"></div>
<div class="t" style="left:1.8px;width:27px;text-align:center;top:346.8px;font-size:15px;color:#3a3a3a;transform:scaleX(0.86)">17</div>
<div class="abs" style="left:30px;top:384.4px;width:971px;height:1px;background:#d8d8d8"></div>
<div class="abs" style="left:2px;top:384.4px;width:27.5px;height:1px;background:#bdbdbd"></div>
<div class="t" style="left:1.8px;width:27px;text-align:center;top:367.1px;font-size:15px;color:#3a3a3a;transform:scaleX(0.86)">18</div>
<div class="abs" style="left:30px;top:404.6px;width:971px;height:1px;background:#d8d8d8"></div>
<div class="abs" style="left:2px;top:404.6px;width:27.5px;height:1px;background:#bdbdbd"></div>
<div class="t" style="left:1.8px;width:27px;text-align:center;top:387.4px;font-size:15px;color:#3a3a3a;transform:scaleX(0.86)">19</div>
<div class="abs" style="left:29.2px;top:20px;width:1px;height:380px;background:#a9a9a9"></div>
<div class="abs" style="left:155.5px;top:325.0px;width:845.5px;height:19px;background:#c6c6c6"></div>
<div class="abs" style="left:240.0px;top:325.0px;width:1px;height:19px;background:#b0b0b0"></div>
<div class="abs" style="left:325.0px;top:325.0px;width:1px;height:19px;background:#b0b0b0"></div>
<div class="abs" style="left:409.5px;top:325.0px;width:1px;height:19px;background:#b0b0b0"></div>
<div class="abs" style="left:494.0px;top:325.0px;width:1px;height:19px;background:#b0b0b0"></div>
<div class="abs" style="left:561.0px;top:325.0px;width:1px;height:19px;background:#b0b0b0"></div>
<div class="abs" style="left:628.8px;top:325.0px;width:1px;height:19px;background:#b0b0b0"></div>
<div class="abs" style="left:696.5px;top:325.0px;width:1px;height:19px;background:#b0b0b0"></div>
<div class="abs" style="left:764.3px;top:325.0px;width:1px;height:19px;background:#b0b0b0"></div>
<div class="abs" style="left:832.0px;top:325.0px;width:1px;height:19px;background:#b0b0b0"></div>
<div class="abs" style="left:899.8px;top:325.0px;width:1px;height:19px;background:#b0b0b0"></div>
<div class="abs" style="left:967.5px;top:325.0px;width:1px;height:19px;background:#b0b0b0"></div>
<div class="cell b" style="left:158.0px;top:21.5px;transform:scaleX(0.919)">East</div>
<div class="cell b" style="left:243.0px;top:21.5px;transform:scaleX(0.963)">West</div>
<div class="cell b" style="left:328.0px;top:21.5px;transform:scaleX(0.997)">North</div>
<div class="cell b" style="left:412.5px;top:21.5px;transform:scaleX(0.975)">South</div>
<div class="cell b" style="left:32.2px;top:41.8px;transform:scaleX(0.953)">January</div>
<div class="cell" style="left:162.8px;top:41.8px;font-size:15.5px;-webkit-text-stroke:0;transform-origin:0 50%;transform:scaleX(0.76)">$</div>
<div class="cell" style="left:155.0px;width:78.5px;text-align:right;top:41.8px">10,000</div>
<div class="cell" style="left:247.8px;top:41.8px;font-size:15.5px;-webkit-text-stroke:0;transform-origin:0 50%;transform:scaleX(0.76)">$</div>
<div class="cell" style="left:240.0px;width:78.5px;text-align:right;top:41.8px">25,000</div>
<div class="cell" style="left:332.8px;top:41.8px;font-size:15.5px;-webkit-text-stroke:0;transform-origin:0 50%;transform:scaleX(0.76)">$</div>
<div class="cell" style="left:325.0px;width:78.0px;text-align:right;top:41.8px">12,000</div>
<div class="cell" style="left:417.3px;top:41.8px;font-size:15.5px;-webkit-text-stroke:0;transform-origin:0 50%;transform:scaleX(0.76)">$</div>
<div class="cell" style="left:409.5px;width:78.0px;text-align:right;top:41.8px">22,000</div>
<div class="cell b" style="left:32.2px;top:62.0px;transform:scaleX(0.977)">February</div>
<div class="cell" style="left:162.8px;top:62.0px;font-size:15.5px;-webkit-text-stroke:0;transform-origin:0 50%;transform:scaleX(0.76)">$</div>
<div class="cell" style="left:155.0px;width:78.5px;text-align:right;top:62.0px">10,500</div>
<div class="cell" style="left:247.8px;top:62.0px;font-size:15.5px;-webkit-text-stroke:0;transform-origin:0 50%;transform:scaleX(0.76)">$</div>
<div class="cell" style="left:240.0px;width:78.5px;text-align:right;top:62.0px">25,400</div>
<div class="cell" style="left:332.8px;top:62.0px;font-size:15.5px;-webkit-text-stroke:0;transform-origin:0 50%;transform:scaleX(0.76)">$</div>
<div class="cell" style="left:325.0px;width:78.0px;text-align:right;top:62.0px">12,250</div>
<div class="cell" style="left:417.3px;top:62.0px;font-size:15.5px;-webkit-text-stroke:0;transform-origin:0 50%;transform:scaleX(0.76)">$</div>
<div class="cell" style="left:409.5px;width:78.0px;text-align:right;top:62.0px">22,350</div>
<div class="cell b" style="left:32.2px;top:82.3px;transform:scaleX(1.039)">March</div>
<div class="cell" style="left:162.8px;top:82.3px;font-size:15.5px;-webkit-text-stroke:0;transform-origin:0 50%;transform:scaleX(0.76)">$</div>
<div class="cell" style="left:155.0px;width:78.5px;text-align:right;top:82.3px">11,000</div>
<div class="cell" style="left:247.8px;top:82.3px;font-size:15.5px;-webkit-text-stroke:0;transform-origin:0 50%;transform:scaleX(0.76)">$</div>
<div class="cell" style="left:240.0px;width:78.5px;text-align:right;top:82.3px">25,800</div>
<div class="cell" style="left:332.8px;top:82.3px;font-size:15.5px;-webkit-text-stroke:0;transform-origin:0 50%;transform:scaleX(0.76)">$</div>
<div class="cell" style="left:325.0px;width:78.0px;text-align:right;top:82.3px">12,500</div>
<div class="cell" style="left:417.3px;top:82.3px;font-size:15.5px;-webkit-text-stroke:0;transform-origin:0 50%;transform:scaleX(0.76)">$</div>
<div class="cell" style="left:409.5px;width:78.0px;text-align:right;top:82.3px">22,700</div>
<div class="cell b" style="left:32.2px;top:102.6px;transform:scaleX(0.950)">April</div>
<div class="cell" style="left:162.8px;top:102.6px;font-size:15.5px;-webkit-text-stroke:0;transform-origin:0 50%;transform:scaleX(0.76)">$</div>
<div class="cell" style="left:155.0px;width:78.5px;text-align:right;top:102.6px">11,500</div>
<div class="cell" style="left:247.8px;top:102.6px;font-size:15.5px;-webkit-text-stroke:0;transform-origin:0 50%;transform:scaleX(0.76)">$</div>
<div class="cell" style="left:240.0px;width:78.5px;text-align:right;top:102.6px">26,200</div>
<div class="cell" style="left:332.8px;top:102.6px;font-size:15.5px;-webkit-text-stroke:0;transform-origin:0 50%;transform:scaleX(0.76)">$</div>
<div class="cell" style="left:325.0px;width:78.0px;text-align:right;top:102.6px">12,750</div>
<div class="cell" style="left:417.3px;top:102.6px;font-size:15.5px;-webkit-text-stroke:0;transform-origin:0 50%;transform:scaleX(0.76)">$</div>
<div class="cell" style="left:409.5px;width:78.0px;text-align:right;top:102.6px">23,050</div>
<div class="cell b" style="left:32.2px;top:122.9px;transform:scaleX(1.055)">May</div>
<div class="cell" style="left:162.8px;top:122.9px;font-size:15.5px;-webkit-text-stroke:0;transform-origin:0 50%;transform:scaleX(0.76)">$</div>
<div class="cell" style="left:155.0px;width:78.5px;text-align:right;top:122.9px">12,000</div>
<div class="cell" style="left:247.8px;top:122.9px;font-size:15.5px;-webkit-text-stroke:0;transform-origin:0 50%;transform:scaleX(0.76)">$</div>
<div class="cell" style="left:240.0px;width:78.5px;text-align:right;top:122.9px">26,600</div>
<div class="cell" style="left:332.8px;top:122.9px;font-size:15.5px;-webkit-text-stroke:0;transform-origin:0 50%;transform:scaleX(0.76)">$</div>
<div class="cell" style="left:325.0px;width:78.0px;text-align:right;top:122.9px">13,000</div>
<div class="cell" style="left:417.3px;top:122.9px;font-size:15.5px;-webkit-text-stroke:0;transform-origin:0 50%;transform:scaleX(0.76)">$</div>
<div class="cell" style="left:409.5px;width:78.0px;text-align:right;top:122.9px">23,400</div>
<div class="cell b" style="left:32.2px;top:143.1px;transform:scaleX(0.927)">June</div>
<div class="cell" style="left:162.8px;top:143.1px;font-size:15.5px;-webkit-text-stroke:0;transform-origin:0 50%;transform:scaleX(0.76)">$</div>
<div class="cell" style="left:155.0px;width:78.5px;text-align:right;top:143.1px">12,500</div>
<div class="cell" style="left:247.8px;top:143.1px;font-size:15.5px;-webkit-text-stroke:0;transform-origin:0 50%;transform:scaleX(0.76)">$</div>
<div class="cell" style="left:240.0px;width:78.5px;text-align:right;top:143.1px">27,000</div>
<div class="cell" style="left:332.8px;top:143.1px;font-size:15.5px;-webkit-text-stroke:0;transform-origin:0 50%;transform:scaleX(0.76)">$</div>
<div class="cell" style="left:325.0px;width:78.0px;text-align:right;top:143.1px">13,250</div>
<div class="cell" style="left:417.3px;top:143.1px;font-size:15.5px;-webkit-text-stroke:0;transform-origin:0 50%;transform:scaleX(0.76)">$</div>
<div class="cell" style="left:409.5px;width:78.0px;text-align:right;top:143.1px">23,750</div>
<div class="cell b" style="left:32.2px;top:183.7px;transform:scaleX(0.895)">July</div>
<div class="cell" style="left:162.8px;top:183.7px;font-size:15.5px;-webkit-text-stroke:0;transform-origin:0 50%;transform:scaleX(0.76)">$</div>
<div class="cell" style="left:155.0px;width:78.5px;text-align:right;top:183.7px">13,000</div>
<div class="cell" style="left:247.8px;top:183.7px;font-size:15.5px;-webkit-text-stroke:0;transform-origin:0 50%;transform:scaleX(0.76)">$</div>
<div class="cell" style="left:240.0px;width:78.5px;text-align:right;top:183.7px">27,400</div>
<div class="cell" style="left:332.8px;top:183.7px;font-size:15.5px;-webkit-text-stroke:0;transform-origin:0 50%;transform:scaleX(0.76)">$</div>
<div class="cell" style="left:325.0px;width:78.0px;text-align:right;top:183.7px">13,500</div>
<div class="cell" style="left:417.3px;top:183.7px;font-size:15.5px;-webkit-text-stroke:0;transform-origin:0 50%;transform:scaleX(0.76)">$</div>
<div class="cell" style="left:409.5px;width:78.0px;text-align:right;top:183.7px">24,100</div>
<div class="cell b" style="left:32.2px;top:203.9px;transform:scaleX(0.953)">August</div>
<div class="cell" style="left:162.8px;top:203.9px;font-size:15.5px;-webkit-text-stroke:0;transform-origin:0 50%;transform:scaleX(0.76)">$</div>
<div class="cell" style="left:155.0px;width:78.5px;text-align:right;top:203.9px">13,500</div>
<div class="cell" style="left:247.8px;top:203.9px;font-size:15.5px;-webkit-text-stroke:0;transform-origin:0 50%;transform:scaleX(0.76)">$</div>
<div class="cell" style="left:240.0px;width:78.5px;text-align:right;top:203.9px">27,800</div>
<div class="cell" style="left:332.8px;top:203.9px;font-size:15.5px;-webkit-text-stroke:0;transform-origin:0 50%;transform:scaleX(0.76)">$</div>
<div class="cell" style="left:325.0px;width:78.0px;text-align:right;top:203.9px">13,750</div>
<div class="cell" style="left:417.3px;top:203.9px;font-size:15.5px;-webkit-text-stroke:0;transform-origin:0 50%;transform:scaleX(0.76)">$</div>
<div class="cell" style="left:409.5px;width:78.0px;text-align:right;top:203.9px">24,450</div>
<div class="cell b" style="left:32.2px;top:224.2px;transform:scaleX(1.015)">September</div>
<div class="cell" style="left:162.8px;top:224.2px;font-size:15.5px;-webkit-text-stroke:0;transform-origin:0 50%;transform:scaleX(0.76)">$</div>
<div class="cell" style="left:155.0px;width:78.5px;text-align:right;top:224.2px">14,000</div>
<div class="cell" style="left:247.8px;top:224.2px;font-size:15.5px;-webkit-text-stroke:0;transform-origin:0 50%;transform:scaleX(0.76)">$</div>
<div class="cell" style="left:240.0px;width:78.5px;text-align:right;top:224.2px">28,200</div>
<div class="cell" style="left:332.8px;top:224.2px;font-size:15.5px;-webkit-text-stroke:0;transform-origin:0 50%;transform:scaleX(0.76)">$</div>
<div class="cell" style="left:325.0px;width:78.0px;text-align:right;top:224.2px">14,000</div>
<div class="cell" style="left:417.3px;top:224.2px;font-size:15.5px;-webkit-text-stroke:0;transform-origin:0 50%;transform:scaleX(0.76)">$</div>
<div class="cell" style="left:409.5px;width:78.0px;text-align:right;top:224.2px">24,800</div>
<div class="cell b" style="left:32.2px;top:244.5px;transform:scaleX(1.004)">October</div>
<div class="cell" style="left:162.8px;top:244.5px;font-size:15.5px;-webkit-text-stroke:0;transform-origin:0 50%;transform:scaleX(0.76)">$</div>
<div class="cell" style="left:155.0px;width:78.5px;text-align:right;top:244.5px">14,500</div>
<div class="cell" style="left:247.8px;top:244.5px;font-size:15.5px;-webkit-text-stroke:0;transform-origin:0 50%;transform:scaleX(0.76)">$</div>
<div class="cell" style="left:240.0px;width:78.5px;text-align:right;top:244.5px">28,600</div>
<div class="cell" style="left:332.8px;top:244.5px;font-size:15.5px;-webkit-text-stroke:0;transform-origin:0 50%;transform:scaleX(0.76)">$</div>
<div class="cell" style="left:325.0px;width:78.0px;text-align:right;top:244.5px">14,250</div>
<div class="cell" style="left:417.3px;top:244.5px;font-size:15.5px;-webkit-text-stroke:0;transform-origin:0 50%;transform:scaleX(0.76)">$</div>
<div class="cell" style="left:409.5px;width:78.0px;text-align:right;top:244.5px">25,150</div>
<div class="cell b" style="left:32.2px;top:264.7px;transform:scaleX(1.033)">November</div>
<div class="cell" style="left:162.8px;top:264.7px;font-size:15.5px;-webkit-text-stroke:0;transform-origin:0 50%;transform:scaleX(0.76)">$</div>
<div class="cell" style="left:155.0px;width:78.5px;text-align:right;top:264.7px">15,000</div>
<div class="cell" style="left:247.8px;top:264.7px;font-size:15.5px;-webkit-text-stroke:0;transform-origin:0 50%;transform:scaleX(0.76)">$</div>
<div class="cell" style="left:240.0px;width:78.5px;text-align:right;top:264.7px">29,000</div>
<div class="cell" style="left:332.8px;top:264.7px;font-size:15.5px;-webkit-text-stroke:0;transform-origin:0 50%;transform:scaleX(0.76)">$</div>
<div class="cell" style="left:325.0px;width:78.0px;text-align:right;top:264.7px">14,500</div>
<div class="cell" style="left:417.3px;top:264.7px;font-size:15.5px;-webkit-text-stroke:0;transform-origin:0 50%;transform:scaleX(0.76)">$</div>
<div class="cell" style="left:409.5px;width:78.0px;text-align:right;top:264.7px">25,500</div>
<div class="cell b" style="left:32.2px;top:285.0px;transform:scaleX(1.006)">December</div>
<div class="cell" style="left:162.8px;top:285.0px;font-size:15.5px;-webkit-text-stroke:0;transform-origin:0 50%;transform:scaleX(0.76)">$</div>
<div class="cell" style="left:155.0px;width:78.5px;text-align:right;top:285.0px">15,500</div>
<div class="cell" style="left:247.8px;top:285.0px;font-size:15.5px;-webkit-text-stroke:0;transform-origin:0 50%;transform:scaleX(0.76)">$</div>
<div class="cell" style="left:240.0px;width:78.5px;text-align:right;top:285.0px">30,000</div>
<div class="cell" style="left:332.8px;top:285.0px;font-size:15.5px;-webkit-text-stroke:0;transform-origin:0 50%;transform:scaleX(0.76)">$</div>
<div class="cell" style="left:325.0px;width:78.0px;text-align:right;top:285.0px">14,750</div>
<div class="cell" style="left:417.3px;top:285.0px;font-size:15.5px;-webkit-text-stroke:0;transform-origin:0 50%;transform:scaleX(0.76)">$</div>
<div class="cell" style="left:409.5px;width:78.0px;text-align:right;top:285.0px">25,850</div>
<div class="cell b" style="left:32.2px;top:325.5px;transform:scaleX(0.955)">First Half Totals</div>
<div class="cell" style="left:162.8px;top:325.5px;font-size:15.5px;-webkit-text-stroke:0;transform-origin:0 50%;transform:scaleX(0.76)">$</div>
<div class="cell" style="left:155.0px;width:78.5px;text-align:right;top:325.5px">67,500</div>
<div class="cell" style="left:247.8px;top:325.5px;font-size:15.5px;-webkit-text-stroke:0;transform-origin:0 50%;transform:scaleX(0.76)">$</div>
<div class="cell" style="left:240.0px;width:78.5px;text-align:right;top:325.5px">156,000</div>
<div class="cell" style="left:332.8px;top:325.5px;font-size:15.5px;-webkit-text-stroke:0;transform-origin:0 50%;transform:scaleX(0.76)">$</div>
<div class="cell" style="left:325.0px;width:78.0px;text-align:right;top:325.5px">75,750</div>
<div class="cell" style="left:417.3px;top:325.5px;font-size:15.5px;-webkit-text-stroke:0;transform-origin:0 50%;transform:scaleX(0.76)">$</div>
<div class="cell" style="left:409.5px;width:78.0px;text-align:right;top:325.5px">137,250</div>
<div class="cell b" style="left:32.2px;top:345.8px;transform:scaleX(0.978)">Second Half Totals</div>
<div class="cell" style="left:162.8px;top:345.8px;font-size:15.5px;-webkit-text-stroke:0;transform-origin:0 50%;transform:scaleX(0.76)">$</div>
<div class="cell" style="left:155.0px;width:78.5px;text-align:right;top:345.8px">85,500</div>
<div class="cell" style="left:247.8px;top:345.8px;font-size:15.5px;-webkit-text-stroke:0;transform-origin:0 50%;transform:scaleX(0.76)">$</div>
<div class="cell" style="left:240.0px;width:78.5px;text-align:right;top:345.8px">171,000</div>
<div class="cell" style="left:332.8px;top:345.8px;font-size:15.5px;-webkit-text-stroke:0;transform-origin:0 50%;transform:scaleX(0.76)">$</div>
<div class="cell" style="left:325.0px;width:78.0px;text-align:right;top:345.8px">84,750</div>
<div class="cell" style="left:417.3px;top:345.8px;font-size:15.5px;-webkit-text-stroke:0;transform-origin:0 50%;transform:scaleX(0.76)">$</div>
<div class="cell" style="left:409.5px;width:78.0px;text-align:right;top:345.8px">149,850</div>
<div class="abs" style="left:582.5px;top:187.2px;width:37.5px;height:22.4px;background:rgba(0,0,0,0.028);box-shadow:0 1px 1px rgba(0,0,0,0.03)"></div>
<div class="abs" style="left:30px;top:19px;width:971px;height:1.5px;background:#217346"></div>
<div class="abs" style="left:30px;top:160.7px;width:971px;height:2.3px;background:#217346"></div>
<div class="abs" style="left:30px;top:181.0px;width:971px;height:2.3px;background:#217346"></div>
<div class="abs" style="left:29.6px;top:160.5px;width:1.3px;height:22.3px;background:#217346"></div>
<div class="abs" style="left:29px;top:322.8px;width:972px;height:2.1px;background:#217346"></div>
<div class="abs" style="left:29px;top:343.6px;width:972px;height:2px;background:#217346"></div>
<div class="abs" style="left:28.6px;top:322.8px;width:1.8px;height:22px;background:#217346"></div>
<div class="abs" style="left:28.4px;top:341.8px;width:5px;height:5.4px;background:#217346;border:1px solid #fff;border-left:none"></div>
<div class="abs" style="left:1001px;top:0;width:23px;height:394px;background:#f0f0f0"></div>
<div class="abs" style="left:1001px;top:0;width:1.5px;height:394px;background:#bdbdbd"></div>
<div class="abs" style="left:1002px;top:0;width:21px;height:395px;background:#e6e6e6"></div>
<div class="abs" style="left:1001px;top:0;width:1.4px;height:395px;background:#a6a6a6"></div>
<div class="abs" style="left:1004.4px;top:17px;width:16px;height:363px;background:#f1f1f1"></div>
<div class="abs" style="left:1004.2px;top:2.1999999999999886px;width:16.4px;height:15.2px;background:#fff;border:1px solid #ababab"></div>
<div class="abs" style="left:1004.2px;top:18px;width:16.4px;height:302.6px;background:#fff;border:1px solid #ababab"></div>
<div class="abs" style="left:1004.2px;top:379.79999999999995px;width:16.4px;height:15.8px;background:#fff;border:1px solid #ababab"></div>
<svg style="left:0;top:0" width="1024" height="394" viewBox="0 217 1024 394"><path d="M1008.6 229 L1012.4 224.8 L1016.2 229 Z" fill="#222"/><path d="M1008.4 602.6 L1012.4 607 L1016.4 602.6 Z" fill="#222"/></svg>
</div>
<div id="sheettabs">
<div class="abs" style="left:2px;top:-0.1px;width:1000px;height:1.2px;background:#a6a6a6"></div>
<div class="abs" style="left:170.8px;top:0.6px;width:61.8px;height:20.600000000000023px;background:#fff"></div>
<div class="abs" style="left:170.8px;top:20.399999999999977px;width:61.8px;height:2px;background:#217346"></div>
<div class="abs" style="left:170.4px;top:1px;width:1px;height:20.399999999999977px;background:#ababab"></div>
<div class="abs" style="left:232.2px;top:1px;width:1px;height:20.399999999999977px;background:#ababab"></div>
<div class="abs" style="left:88.3px;top:3.6000000000000227px;width:1px;height:17.4px;background:#ababab"></div>
<div class="abs" style="left:299px;top:3.6000000000000227px;width:1px;height:17.4px;background:#ababab"></div>
<div class="abs" style="left:365.5px;top:3.6000000000000227px;width:1px;height:17.4px;background:#ababab"></div>
<div class="abs" style="left:432.5px;top:3.6000000000000227px;width:1px;height:17.4px;background:#ababab"></div>
<div class="abs" style="left:499.5px;top:3.6000000000000227px;width:1px;height:17.4px;background:#ababab"></div>
<div class="abs" style="left:566.3px;top:3.6000000000000227px;width:1px;height:17.4px;background:#ababab"></div>
<div class="t" style="left:99.5px;top:2.6px;font-size:14px;color:#444;transform-origin:0 0;transform:scaleX(1.007);">Compare</div>
<div class="t" style="left:180.8px;top:2.6px;font-size:14px;font-weight:bold;color:#217346;transform-origin:0 0;transform:scaleX(0.976);">Filters</div>
<div class="t" style="left:243.0px;top:2.6px;font-size:14px;color:#444;transform-origin:0 0;transform:scaleX(0.965);">Sheet1</div>
<div class="t" style="left:310.0px;top:2.6px;font-size:14px;color:#444;transform-origin:0 0;transform:scaleX(0.969);">Sheet2</div>
<div class="t" style="left:376.8px;top:2.6px;font-size:14px;color:#444;transform-origin:0 0;transform:scaleX(0.962);">Sheet3</div>
<div class="t" style="left:443.3px;top:2.6px;font-size:14px;color:#444;transform-origin:0 0;transform:scaleX(0.969);">Sheet4</div>
<div class="t" style="left:510.0px;top:2.6px;font-size:14px;color:#444;transform-origin:0 0;transform:scaleX(0.976);">Sheet5</div>
<div class="t" style="left:577.5px;top:2.6px;font-size:14px;color:#444;transform-origin:0 0;transform:scaleX(0.928);padding-bottom:4px;-webkit-mask-image:linear-gradient(90deg,#000 86%,rgba(0,0,0,0.25) 100%);">SUMIF_C</div>
<svg style="left:0;top:0" width="1024" height="25.4" viewBox="0 611.6 1024 25.4">
<path d="M29.2 620.6 V627.6 L25.2 624.1 Z" fill="#c6c6c6"/>
<path d="M49.4 620.6 V627.6 L53.4 624.1 Z" fill="#217346"/>
<g fill="#217346"><rect x="642" y="624.2" width="2" height="2"/><rect x="646" y="624.2" width="2" height="2"/><rect x="650" y="624.2" width="2" height="2"/></g>
<circle cx="671.3" cy="624.3" r="7.6" fill="none" stroke="#555" stroke-width="1.1"/>
<path d="M667 624.3 H675.6 M671.3 620 V628.6" stroke="#555" stroke-width="1.2"/>
<g fill="#a6a6a6"><rect x="695.4" y="619.4" width="1.8" height="1.8"/><rect x="695.4" y="623.2" width="1.8" height="1.8"/><rect x="695.4" y="627" width="1.8" height="1.8"/></g>
<rect x="710.5" y="616.3" width="291" height="15.2" fill="#f1f1f1"/>
<rect x="710.5" y="616.3" width="15.4" height="15.2" fill="#fff" stroke="#ababab" stroke-width="1"/>
<rect x="725.9" y="616.3" width="240.7" height="15.2" fill="#fff" stroke="#ababab" stroke-width="1"/>
<rect x="986.2" y="616.3" width="15.4" height="15.2" fill="#fff" stroke="#ababab" stroke-width="1"/>
<path d="M720.4 620.2 V627.6 L716.2 623.9 Z" fill="#222"/>
<path d="M992.2 620.2 V627.6 L996.4 623.9 Z" fill="#222"/>
</svg>
<div class="abs" style="left:2px;top:24.600000000000023px;width:1021px;height:1px;background:#c6c6c6"></div>
</div>
<div id="status">
<div class="t" style="left:8.8px;top:5.9px;font-size:11.5px;color:#444;transform-origin:0 0;transform:scaleX(0.961);">Drag to move cell contents, use Alt key to switch sheets</div>
<div class="t" style="left:478.0px;top:5.9px;font-size:11.5px;color:#444;transform-origin:0 0;transform:scaleX(0.930);">Average: 109125</div>
<div class="t" style="left:598.8px;top:5.9px;font-size:11.5px;color:#444;transform-origin:0 0;transform:scaleX(0.940);">Display Settings</div>
<div class="t" style="left:977.0px;top:5.9px;font-size:11.5px;color:#444;transform-origin:0 0;transform:scaleX(0.850);">100%</div>
<div class="abs" style="left:697.2px;top:0;width:41.7px;height:22px;background:#c8c8c8"></div>
<svg style="left:0;top:0" width="1024" height="23" viewBox="0 637 1024 23" fill="none" stroke="#444" stroke-width="1.1">
<path d="M586 650.2 H581.8 V642.5 H595 V648"/>
<path d="M591.99 647.83 L592.10 646.21 L590.10 646.21 L590.21 647.83 L589.06 648.50 L587.71 647.59 L586.71 649.32 L588.17 650.03 L588.17 651.37 L586.71 652.08 L587.71 653.81 L589.06 652.90 L590.21 653.57 L590.10 655.19 L592.10 655.19 L591.99 653.57 L593.14 652.90 L594.49 653.81 L595.49 652.08 L594.03 651.37 L594.03 650.03 L595.49 649.32 L594.49 647.59 L593.14 648.50 Z" fill="#3a3a3a" stroke="#3a3a3a" stroke-width="0.8" stroke-linejoin="round"/>
<circle cx="591.1" cy="650.7" r="1.9" fill="#3a3a3a" stroke="#d8d8d8" stroke-width="0.9"/>
<path d="M711 641.4 H723.8 V654.2 H711 Z M715.3 641.4 V654.2 M719.5 641.4 V654.2 M711 645.7 H723.8 M711 649.9 H723.8" stroke="#333" stroke-width="1.1"/>
<path d="M753.2 641.4 H767 V654.2 H753.2 Z M756.2 644.2 H764 V651.4 H756.2 Z M757.8 646.4 H762.4 M757.8 648 H762.4 M757.8 649.6 H762.4" stroke-width="1"/>
<path d="M795.6 641.4 H809.4 V654.2 H795.6 Z M800.4 641.4 V648.6 H805.2 V641.4 M795.6 648.6 H800.4 M805.2 648.6 H809.4" stroke-width="1.1"/>
<path d="M829.8 648.2 H837.4 M843.4 648.2 H949.4 M953.6 648.2 H961.6 M957.6 644.2 V652.2" stroke="#555" stroke-width="1"/>
<rect x="894" y="641.8" width="4.6" height="12.6" fill="#333" stroke="none"/>
</svg>
</div>
<div class="wb" style="left:0;top:0;width:1.3px;height:660px"></div>
<div class="wb" style="left:1023px;top:0;width:1px;height:660px"></div>
<div class="wb" style="left:0;top:659px;width:1024px;height:1px"></div>
</body></html>
